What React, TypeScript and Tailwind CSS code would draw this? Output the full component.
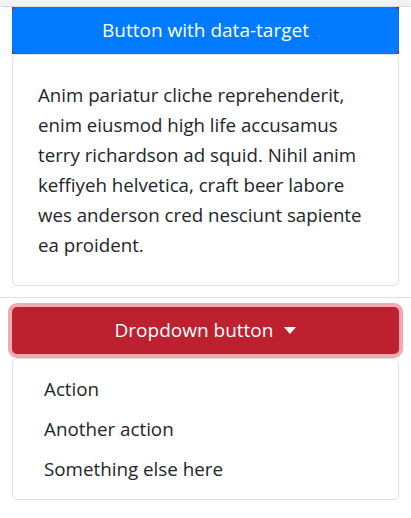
import React from "react";

const font = { fontFamily: '"Open Sans", "Liberation Sans", sans-serif' };

const items = ["Action", "Another action", "Something else here"];

export default function App() {
  return (
    <div className="w-[411px] h-[518px] bg-white text-[#212529] overflow-hidden" style={font}>
      <div className="h-[7px] bg-[#f2f2f2] border-b border-[#dcdcdc]" />

      {/* collapse */}
      <div className="px-3">
        <div className="bg-[#ff0000]">
          <button className="w-full h-[47px] bg-[#007bff] text-white text-[19px] rounded-[5px]">
            Button with data-target
          </button>
        </div>
        <div className="border border-[#dfdfdf] rounded-[5px] p-[25px] text-[18.7px] leading-[30px]">
          Anim pariatur cliche reprehenderit, enim eiusmod high life accusamus terry richardson ad squid.
          Nihil anim keffiyeh helvetica, craft beer labore wes anderson cred nesciunt sapiente ea proident.
        </div>
      </div>

      <div className="mt-[11px] border-t border-[#dfdfdf]" />

      {/* dropdown */}
      <div className="px-3 pt-[9px]">
        <button className="w-full h-[47px] bg-[#bd2130] text-white text-[19px] rounded-[5px] ring-4 ring-[#f0a9b0] flex items-center justify-center gap-[11px]">
          <span>Dropdown button</span>
          <svg width="12" height="7" viewBox="0 0 12 7">
            <path d="M0 0h12L6 7z" fill="white" />
          </svg>
        </button>
        <div className="mt-[4px] border border-[#dfdfdf] rounded-[5px] py-[10px] text-[18.8px] leading-[30px]">
          {items.map((it) => (
            <div key={it} className="px-[31px] py-[5px]">
              {it}
            </div>
          ))}
        </div>
      </div>
    </div>
  );
}
